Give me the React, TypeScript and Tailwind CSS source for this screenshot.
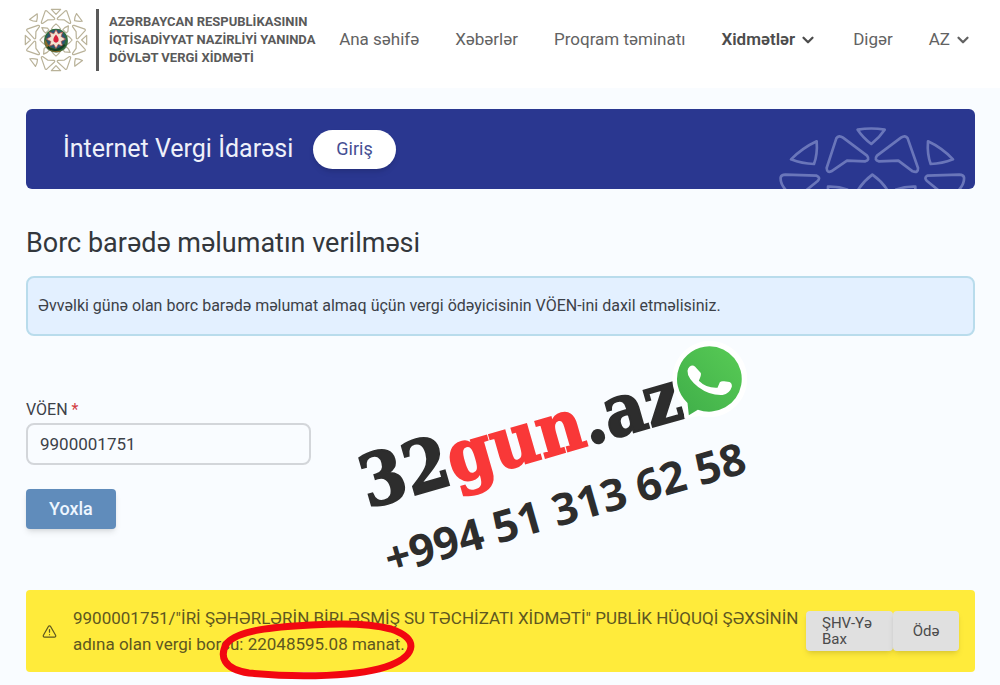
import { ChevronDown, TriangleAlert } from "lucide-react";

const QUARTERS = [0, 90, 180, 270];

function Ornament() {
  return (
    <svg viewBox="-290 -290 580 580" className="size-16 shrink-0" aria-hidden="true">
      <g fill="none" stroke="#b9b299" strokeWidth="11" strokeLinejoin="round">
        {QUARTERS.map((angle) => (
          <g key={angle} transform={`rotate(${angle})`}>
            <path d="M-42-278H42L0-232Z" />
            <path d="M-98-262Q-92-270-82-262L-14-200Q-6-186-20-184L-76-182-122-150Q-136-148-132-164Z" />
            <path d="M98-262Q92-270 82-262L14-200Q6-186 20-184L76-182 122-150Q136-148 132-164Z" />
            <path d="M-170-238-240-186Q-210-168-176-168Q-166-200-170-238Z" />
            <path d="M0-146Q-28-124-42-100L0-84 42-100Q28-124 0-146Z" />
            <path d="M-128-112-78-108-64-92-94-62-112-80Z" />
          </g>
        ))}
      </g>
      <circle r="108" cy="6" fill="#2f6b3c" />
      <path d="M-102-6A104 104 0 0 0 60 92Q0 112-40 74Z" fill="#8a6a2c" />
      <circle r="86" cy="-8" fill="#2b5570" />
      <path
        d="M0-92 20-56 60-72 46-32 86-8 46 14 60 54 20 40 0 76-20 40-60 54-46 14-86-8-46-32-60-72-20-56Z"
        fill="#f1e3d2"
        stroke="#b5524c"
        strokeWidth="7"
      />
      <path d="M0-50Q34-10 20 14Q0 34-20 14Q-34-10 0-50Z" fill="#d8213b" />
      <path d="M-76 62Q0 128 80 44" fill="none" stroke="#163f24" strokeWidth="20" />
    </svg>
  );
}

function BannerOrnament() {
  return (
    <svg
      viewBox="116 80 567 189"
      className="absolute right-2 bottom-0 h-[63px] w-[189px]"
      fill="none"
      stroke="#6a76ba"
      strokeWidth="8"
      strokeLinejoin="round"
      aria-hidden="true"
    >
      <path d="M355 91Q396 84 436 91Q420 115 396 134Q370 114 355 91Z" />
      <path d="M291 117Q298 106 311 115L383 169Q393 182 377 186L323 184 276 216Q263 222 262 206Z" />
      <path d="M505 117Q498 106 485 115L413 169Q403 182 419 186L477 184 520 216Q537 222 536 206Z" />
      <path d="M232 126Q191 145 155 180Q188 193 224 194Q235 164 232 126Z" />
      <path d="M566 126Q607 145 641 180Q608 193 574 194Q563 164 566 126Z" />
      <path d="M142 275Q122 254 124 234Q126 226 138 226L232 229Q245 235 235 245L198 275" />
      <path d="M656 275Q676 254 674 234Q672 226 660 226L564 229Q553 235 563 245L600 275" />
      <path d="M354 275Q372 246 399 226Q428 246 446 275" />
      <path d="M266 275V262Q298 261 326 271M528 275V262Q498 261 468 271" />
    </svg>
  );
}

function WhatsAppBadge() {
  return (
    <svg viewBox="995 25 230 240" className="absolute top-[339px] left-[672px] h-20 w-[77px]" aria-hidden="true">
      <defs>
        <linearGradient id="badge" x1="0" y1="1" x2="1" y2="0">
          <stop offset="0" stopColor="#3fae49" />
          <stop offset="1" stopColor="#58cb55" />
        </linearGradient>
      </defs>
      <path
        d="M1107 30A115 115 0 1 1 1075 256L1032 264 1028 225A115 115 0 0 1 1107 30Z"
        fill="#fff"
      />
      <path
        d="M1107 47A98 98 0 1 1 1072 237L1045 254 1041 217A98 98 0 0 1 1107 47Z"
        fill="url(#badge)"
      />
      <path
        d="M1047 108Q1056 101 1064 108L1081 127Q1083 133 1075 150Q1098 173 1131 171L1138 155Q1143 150 1151 152L1167 154Q1175 158 1174 168Q1168 188 1146 193Q1108 195 1073 169Q1040 142 1041 120Q1042 112 1047 108Z"
        fill="#fff"
      />
    </svg>
  );
}

const links = ["Ana səhifə", "Xəbərlər", "Proqram təminatı"];

export default function App() {
  return (
    <div className="relative min-h-screen overflow-hidden bg-[#f9fcff] font-['Roboto','Noto_Sans',sans-serif] text-[#3c4148]">
      <header className="flex h-[88px] items-start bg-white pt-2 pr-7 pl-6">
        <a href="#home" className="flex items-center text-[#5a5a5a]">
          <Ornament />
          <span className="ml-2 border-l-3 border-[#5a5a5a] py-1 pl-[10px] text-[13px] leading-[18px] font-bold whitespace-nowrap">
            AZƏRBAYCAN RESPUBLİKASININ
            <br />
            İQTİSADİYYAT NAZİRLİYİ YANINDA
            <br />
            DÖVLƏT VERGİ XİDMƏTİ
          </span>
        </a>
        <nav className="ml-auto flex h-16 items-center gap-9 text-[17px] whitespace-nowrap text-[#626262]">
          {links.map((label) => (
            <a key={label} href="#page">
              {label}
            </a>
          ))}
          <button type="button" className="flex items-center gap-1 font-semibold text-[#4c4c4c]">
            Xidmətlər
            <ChevronDown size={18} strokeWidth={3} />
          </button>
          <a href="#other">Digər</a>
          <button type="button" className="flex items-center gap-1">
            AZ
            <ChevronDown size={18} strokeWidth={3} />
          </button>
        </nav>
      </header>

      <main className="pt-[21px] pr-[25px] pb-3 pl-[26px]">
        <section className="relative flex h-20 items-center gap-5 overflow-hidden rounded-md bg-[#2a3790] pl-[37px]">
          <span className="text-[25px] text-[#eef0fa]">İnternet Vergi İdarəsi</span>
          <button
            type="button"
            className="h-[39px] rounded-full bg-white px-[23px] text-lg text-[#454f93] shadow-md"
          >
            Giriş
          </button>
          <BannerOrnament />
        </section>

        <h1 className="mt-9 text-[27px] leading-9 text-[#33373c]">Borc barədə məlumatın verilməsi</h1>
        <p className="mt-[15px] flex h-[60px] items-center rounded-lg border-2 border-[#b9dcec] bg-[#e3f0ff] px-[10px] text-base">
          Əvvəlki günə olan borc barədə məlumat almaq üçün vergi ödəyicisinin VÖEN-ini daxil etməlisiniz.
        </p>

        <form className="mt-16 flex flex-col items-start" onSubmit={(event) => event.preventDefault()}>
          <label htmlFor="voen" className="text-base leading-5">
            VÖEN <span className="text-[#d23c44]">*</span>
          </label>
          <input
            id="voen"
            defaultValue="9900001751"
            className="mt-[3px] h-[42px] w-[285px] rounded-lg border-2 border-[#d3d6da] bg-transparent px-3 text-[17px] outline-none"
          />
          <button
            type="submit"
            className="mt-6 h-10 rounded bg-[#608cbb] px-[23px] text-lg font-medium text-[#eef6ff] shadow-md"
          >
            Yoxla
          </button>
        </form>

        <section className="relative mt-[61px] flex h-[82px] items-center rounded bg-[#ffeb3b] px-4">
          <TriangleAlert size={15} className="shrink-0 text-[#5e5720]" />
          <p className="ml-4 flex-1 text-[17px] leading-[26px] text-[#5e5720]">
            9900001751/"İRİ ŞƏHƏRLƏRİN BİRLƏŞMİŞ SU TƏCHİZATI XİDMƏTİ" PUBLİK HÜQUQİ ŞƏXSİNİN adına olan
            vergi borcu: 22048595.08 manat.
          </p>
          <div className="flex h-10 shrink-0 text-[15px] leading-4 text-[#4b4b4b]">
            <button type="button" className="w-[87px] rounded bg-[#e0e0e0] px-4 text-left shadow-md">
              ŞHV-Yə Bax
            </button>
            <button type="button" className="w-[66px] rounded bg-[#e0e0e0] shadow-md">
              Ödə
            </button>
          </div>
          <svg
            viewBox="0 0 200 66"
            className="absolute top-[26px] left-[193px] h-[66px] w-[200px]"
            fill="none"
            stroke="#f20710"
            strokeWidth="7"
            strokeLinecap="round"
            aria-hidden="true"
          >
            <path d="M92 9C54 11 20 14 8 27C0 40 4 53 30 57C78 62 142 61 172 49C196 39 201 23 172 13C150 7 122 7 92 9Z" />
          </svg>
        </section>
      </main>

      <div className="pointer-events-none absolute top-[446px] left-[350px] origin-top-left -rotate-16 whitespace-nowrap text-[#2d2d2d]">
        <div className="font-['DejaVu_Serif_Condensed','DejaVu_Serif',serif] text-[72px] leading-[80px] font-bold [-webkit-text-stroke:2px_currentColor]">
          32<span className="text-[#f93838]">gun</span>.az
        </div>
        <div className="mt-2 ml-[3px] font-['Noto_Sans',sans-serif] text-[44px] leading-[60px] font-bold">
          +994 51 313 62 58
        </div>
      </div>
      <WhatsAppBadge />
    </div>
  );
}
